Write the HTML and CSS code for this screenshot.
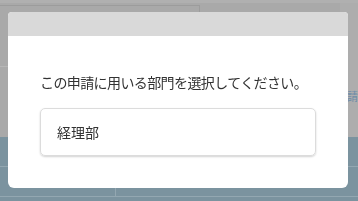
FILE: index.html
```html
<!DOCTYPE html>
<html lang="ja">

<head>
  <meta charset="UTF-8">
  <meta name="viewport" content="width=device-width, initial-scale=1.0">
  <title>部門選択</title>
  <link rel="stylesheet" href="styles.css">
</head>

<body>
  <!-- page behind the dimmed overlay -->
  <div class="page">
    <div class="page-top">
      <div class="panel"></div>
      <div class="side">
        <span class="side-link">請求</span>
      </div>
    </div>
    <div class="page-table">
      <div class="row"></div>
      <div class="row">
        <div class="cell"></div>
      </div>
    </div>
  </div>

  <div class="modal">
    <div class="modal-head"></div>
    <div class="modal-body">
      <p class="modal-title">この申請に用いる部門を選択してください。</p>
      <div class="dept-option">経理部</div>
    </div>
  </div>
</body>

</html>
```

FILE: styles.css
```css
body {
  margin: 0;
  background-color: #a9a9a9;
  font-family: "Noto Sans CJK JP", "Noto Sans", sans-serif;
  overflow: hidden;
}

.page {
  height: 201px;
  display: flex;
  flex-direction: column;
}

.page-top {
  height: 137px;
  display: flex;
  border-top: 3px solid #b0b0b0;
  box-sizing: border-box;
}

.panel {
  margin-top: 2px;
  width: 199px;
  height: 60px;
  border-top: 1px solid #9c9c9c;
  border-right: 1px solid #9c9c9c;
  border-bottom: 1px solid #b6b6b6;
}

.side {
  margin-left: auto;
  width: 18px;
  background-color: #adadad;
  padding-top: 86px;
  overflow: hidden;
}

.side-link {
  display: block;
  margin-left: 7px;
  font-size: 11px;
  line-height: 14px;
  color: #6e8ca8;
  white-space: nowrap;
}

.page-table {
  flex: 1;
  background-color: #7b939f;
}

.row {
  height: 29px;
  border-bottom: 1px solid #93a7b1;
}

.row .cell {
  width: 115px;
  height: 100%;
  border-right: 1px solid #93a7b1;
}

.modal {
  position: fixed;
  top: 12px;
  left: 8px;
  width: 340px;
  background-color: #fff;
  border-radius: 4px 4px 6px 6px;
  overflow: hidden;
}

.modal-head {
  height: 24px;
  background-color: #d9d9d9;
}

.modal-body {
  padding: 36px 32px 32px;
}

.modal-title {
  margin: 0;
  font-size: 14px;
  line-height: 20px;
  letter-spacing: -0.6px;
  color: #333;
  white-space: nowrap;
}

.dept-option {
  margin-top: 16px;
  height: 48px;
  box-sizing: border-box;
  display: flex;
  align-items: center;
  padding: 0 16px;
  border: 1px solid #dcdcdc;
  border-radius: 5px;
  box-shadow: 0 1px 2px rgba(0, 0, 0, 0.18);
  font-size: 14px;
  color: #333;
}
```
